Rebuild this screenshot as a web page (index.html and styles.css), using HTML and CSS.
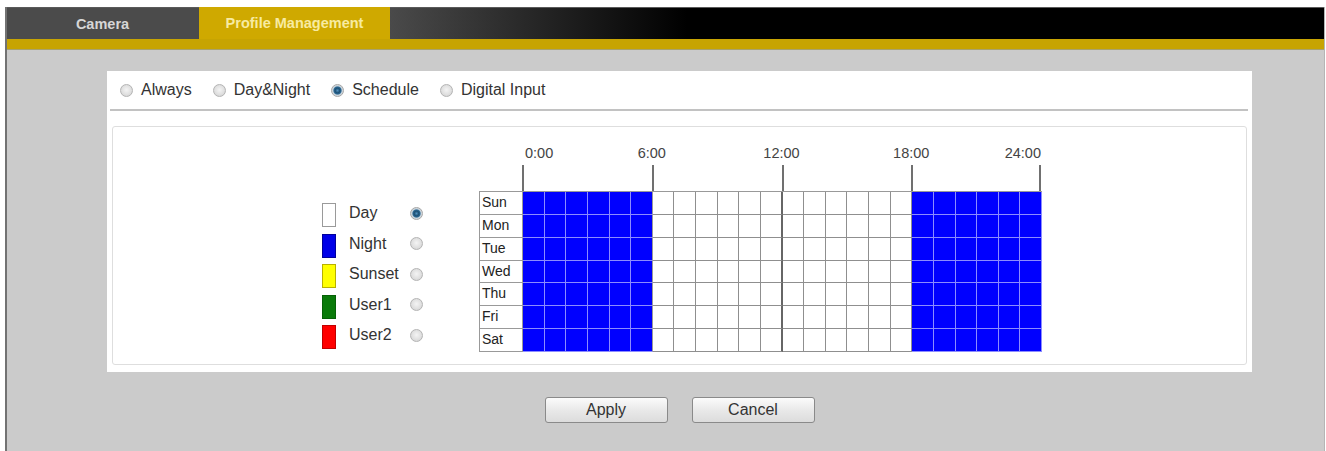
FILE: index.html
```html
<!DOCTYPE html>
<html>
<head>
<meta charset="utf-8">
<link rel="stylesheet" href="styles.css">
</head>
<body>
<div class="frame">
  <div class="tabbar">
    <div class="tab tab-camera">Camera</div>
    <div class="tab tab-active">Profile Management</div>
  </div>
  <div class="strip"></div>
  <div class="content">
    <div class="panel">
      <div class="mode-row">
        <label class="mode"><span class="radio"></span>Always</label>
        <label class="mode"><span class="radio"></span>Day&amp;Night</label>
        <label class="mode"><span class="radio on"></span>Schedule</label>
        <label class="mode"><span class="radio"></span>Digital Input</label>
      </div>
      <div class="sep"></div>
      <div class="box">
        <div class="legend">
          <div class="legend-item"><span class="swatch sw-day"></span><span class="legend-label">Day</span><span class="radio on"></span></div>
          <div class="legend-item"><span class="swatch sw-night"></span><span class="legend-label">Night</span><span class="radio"></span></div>
          <div class="legend-item"><span class="swatch sw-sunset"></span><span class="legend-label">Sunset</span><span class="radio"></span></div>
          <div class="legend-item"><span class="swatch sw-user1"></span><span class="legend-label">User1</span><span class="radio"></span></div>
          <div class="legend-item"><span class="swatch sw-user2"></span><span class="legend-label">User2</span><span class="radio"></span></div>
        </div>
        <div class="schedule">
          <div class="times">
            <span class="t t-first">0:00</span>
            <span class="t">6:00</span>
            <span class="t">12:00</span>
            <span class="t">18:00</span>
            <span class="t t-last">24:00</span>
          </div>
          <div class="ticks"><span></span><span></span><span></span><span class="last"></span></div>
          <div class="grid">
            <div class="day">Sun</div>
            <span class="n"></span><span class="n"></span><span class="n"></span><span class="n"></span><span class="n"></span><span class="n e"></span>
            <span class="d"></span><span class="d"></span><span class="d"></span><span class="d"></span><span class="d"></span><span class="d m"></span>
            <span class="d"></span><span class="d"></span><span class="d"></span><span class="d"></span><span class="d"></span><span class="d"></span>
            <span class="n"></span><span class="n"></span><span class="n"></span><span class="n"></span><span class="n"></span><span class="n"></span>
            <div class="day">Mon</div>
            <span class="n"></span><span class="n"></span><span class="n"></span><span class="n"></span><span class="n"></span><span class="n e"></span>
            <span class="d"></span><span class="d"></span><span class="d"></span><span class="d"></span><span class="d"></span><span class="d m"></span>
            <span class="d"></span><span class="d"></span><span class="d"></span><span class="d"></span><span class="d"></span><span class="d"></span>
            <span class="n"></span><span class="n"></span><span class="n"></span><span class="n"></span><span class="n"></span><span class="n"></span>
            <div class="day">Tue</div>
            <span class="n"></span><span class="n"></span><span class="n"></span><span class="n"></span><span class="n"></span><span class="n e"></span>
            <span class="d"></span><span class="d"></span><span class="d"></span><span class="d"></span><span class="d"></span><span class="d m"></span>
            <span class="d"></span><span class="d"></span><span class="d"></span><span class="d"></span><span class="d"></span><span class="d"></span>
            <span class="n"></span><span class="n"></span><span class="n"></span><span class="n"></span><span class="n"></span><span class="n"></span>
            <div class="day">Wed</div>
            <span class="n"></span><span class="n"></span><span class="n"></span><span class="n"></span><span class="n"></span><span class="n e"></span>
            <span class="d"></span><span class="d"></span><span class="d"></span><span class="d"></span><span class="d"></span><span class="d m"></span>
            <span class="d"></span><span class="d"></span><span class="d"></span><span class="d"></span><span class="d"></span><span class="d"></span>
            <span class="n"></span><span class="n"></span><span class="n"></span><span class="n"></span><span class="n"></span><span class="n"></span>
            <div class="day">Thu</div>
            <span class="n"></span><span class="n"></span><span class="n"></span><span class="n"></span><span class="n"></span><span class="n e"></span>
            <span class="d"></span><span class="d"></span><span class="d"></span><span class="d"></span><span class="d"></span><span class="d m"></span>
            <span class="d"></span><span class="d"></span><span class="d"></span><span class="d"></span><span class="d"></span><span class="d"></span>
            <span class="n"></span><span class="n"></span><span class="n"></span><span class="n"></span><span class="n"></span><span class="n"></span>
            <div class="day">Fri</div>
            <span class="n"></span><span class="n"></span><span class="n"></span><span class="n"></span><span class="n"></span><span class="n e"></span>
            <span class="d"></span><span class="d"></span><span class="d"></span><span class="d"></span><span class="d"></span><span class="d m"></span>
            <span class="d"></span><span class="d"></span><span class="d"></span><span class="d"></span><span class="d"></span><span class="d"></span>
            <span class="n"></span><span class="n"></span><span class="n"></span><span class="n"></span><span class="n"></span><span class="n"></span>
            <div class="day">Sat</div>
            <span class="n"></span><span class="n"></span><span class="n"></span><span class="n"></span><span class="n"></span><span class="n e"></span>
            <span class="d"></span><span class="d"></span><span class="d"></span><span class="d"></span><span class="d"></span><span class="d m"></span>
            <span class="d"></span><span class="d"></span><span class="d"></span><span class="d"></span><span class="d"></span><span class="d"></span>
            <span class="n"></span><span class="n"></span><span class="n"></span><span class="n"></span><span class="n"></span><span class="n"></span>
          </div>
        </div>
      </div>
    </div>
    <div class="actions">
      <button class="btn">Apply</button>
      <button class="btn">Cancel</button>
    </div>
  </div>
</div>
</body>
</html>
```
FILE: styles.css
```css
* { box-sizing: border-box; }

body {
  margin: 0;
  background: #ffffff;
  font-family: "Liberation Sans", Arial, sans-serif;
  color: #333;
}

.frame {
  margin: 7px 0 0 5px;
  width: 1320px;
  height: 444px;
  background: #cbcbcb;
  border-left: 2px solid #727272;
  border-right: 1px solid #b5b5b5;
}

.tabbar {
  display: flex;
  height: 32px;
  background: linear-gradient(to right, #4a4a4a 0, #4a4a4a 383px, #000 680px, #000 100%);
  border-top: 1px solid #5a5a5a;
}

.tab {
  width: 191px;
  display: flex;
  align-items: center;
  justify-content: center;
  font-size: 14.5px;
  font-weight: bold;
}

.tab-camera {
  background: #4b4b4b;
  color: #d6d6d6;
  margin-right: 1px;
}

.tab-active {
  background: #cfa900;
  color: #f7eba2;
  margin-top: -1px;
}

.strip {
  height: 11px;
  background: #c7a402;
  border-bottom: 1px solid #a8a26e;
}

.content {
  padding-top: 21px;
}

.panel {
  margin-left: 100px;
  width: 1145px;
  background: #fff;
  padding-bottom: 7px;
}

.mode-row {
  display: flex;
  align-items: center;
  gap: 21px;
  height: 38px;
  padding-left: 13px;
  font-size: 16px;
  color: #333;
}

.mode {
  display: flex;
  align-items: center;
  gap: 8px;
}

.radio {
  flex: none;
  width: 13px;
  height: 13px;
  border-radius: 50%;
  border: 1px solid #b4b4b4;
  background: radial-gradient(circle at 50% 45%, #f4f4f4 0, #e2e2e2 50%, #cfcfcf 100%);
}

.radio.on {
  border-color: #a6a6a6;
  background: radial-gradient(circle at 50% 50%, #4f8fbd 0, #1b4e72 2.4px, #2f6b96 3.6px, #c9d4dc 4.6px, #e6e6e6 100%);
}

.sep {
  height: 2px;
  margin: 0 4px 0 3px;
  background: #c2c2c2;
}

.box {
  margin: 15px 0 0 5px;
  width: 1135px;
  height: 239px;
  border: 1px solid #dedede;
  border-radius: 3px;
  padding: 18px 0 0 5px;
  display: flex;
  justify-content: center;
  align-items: flex-start;
  gap: 56px;
}

.legend {
  margin-top: 53px;
  display: flex;
  flex-direction: column;
}

.legend-item {
  display: flex;
  align-items: center;
  height: 30.5px;
  font-size: 16px;
  color: #333;
}

.swatch {
  width: 14px;
  height: 24px;
  margin-right: 13px;
  margin-top: 4px;
  border: 1px solid #6d6d6d;
}

.legend-label {
  width: 61px;
}

.sw-day { background: #fff; border-color: #9a9a9a; }
.sw-night { background: #0000e8; border-color: #00009a; }
.sw-sunset { background: #ffff00; border-color: #b8b000; }
.sw-user1 { background: #0a7a0a; border-color: #066006; }
.sw-user2 { background: #ff0000; border-color: #c00000; }

.schedule {
  width: 563px;
}

.times {
  display: flex;
  margin-left: 43px;
  height: 20px;
  font-size: 14.5px;
  line-height: 16px;
  color: #444;
}

.t {
  width: 129.75px;
  text-align: center;
}

.t-first {
  width: 64.875px;
  text-align: left;
  padding-left: 3px;
}

.t-last {
  width: 64.875px;
  text-align: right;
}

.ticks {
  display: grid;
  grid-template-columns: repeat(4, 129.75px);
  margin-left: 43px;
  height: 26px;
}

.ticks span {
  border-left: 2px solid #707070;
}

.ticks .last {
  border-right: 2px solid #707070;
}

.grid {
  display: grid;
  grid-template-columns: 43px repeat(24, 21.625px);
  grid-auto-rows: 22.857px;
  border-top: 1px solid #999;
  border-left: 1px solid #999;
}

.day {
  font-size: 14px;
  line-height: 21px;
  padding-left: 2px;
  color: #222;
  background: #fff;
  border-right: 1px solid #999;
  border-bottom: 1px solid #999;
}

.n {
  background: #0000ff;
  border-right: 1px solid #8c8cff;
  border-bottom: 1px solid #8c8cff;
}

.n.e {
  border-right-color: #9a9a9a;
}

.d {
  background: #fff;
  border-right: 1px solid #8f8f8f;
  border-bottom: 1px solid #8f8f8f;
}

.d.m {
  border-right: 2px solid #666;
}

.actions {
  margin: 25px 0 0 100px;
  width: 1145px;
  display: flex;
  justify-content: center;
  gap: 24px;
}

.btn {
  width: 123px;
  height: 26px;
  border: 1px solid #8a8a8a;
  border-radius: 3px;
  background: linear-gradient(#fbfbfb, #e9e9e9 50%, #dcdcdc);
  font-family: "Liberation Sans", Arial, sans-serif;
  font-size: 16px;
  color: #333;
  padding: 0;
}
```
